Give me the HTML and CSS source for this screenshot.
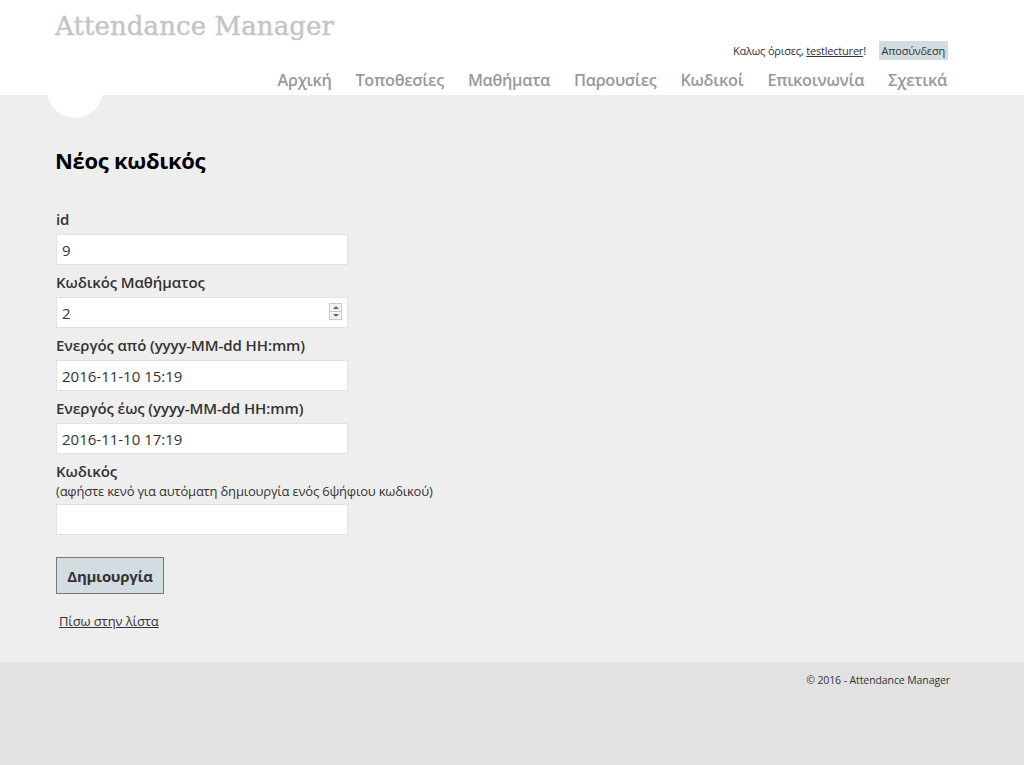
FILE: index.html
```html
<!DOCTYPE html>
<html lang="el">
<head>
<meta charset="utf-8">
<title>Νέος κωδικός - Attendance Manager</title>
<link rel="stylesheet" href="styles.css">
</head>
<body>
<header class="site-header">
  <div class="wrap header-inner">
    <p class="site-title">Attendance Manager</p>
    <div class="login">Καλως όρισες, <a href="#" class="user">testlecturer</a>! <a href="#" class="logout">Αποσύνδεση</a></div>
    <nav class="menu">
      <a href="#">Αρχική</a>
      <a href="#">Τοποθεσίες</a>
      <a href="#">Μαθήματα</a>
      <a href="#">Παρουσίες</a>
      <a href="#">Κωδικοί</a>
      <a href="#">Επικοινωνία</a>
      <a href="#">Σχετικά</a>
    </nav>
  </div>
</header>
<main class="body-content">
  <span class="dot"></span>
  <div class="wrap">
    <h2 class="page-title">Νέος κωδικός</h2>
    <form class="form">
      <label class="lbl first">id</label>
      <input class="field" type="text" value="9">
      <label class="lbl">Κωδικός Μαθήματος</label>
      <div class="num-wrap">
        <input class="field" type="text" value="2">
        <span class="spin"><span class="up"></span><span class="down"></span></span>
      </div>
      <label class="lbl">Ενεργός από (yyyy-MM-dd HH:mm)</label>
      <input class="field" type="text" value="2016-11-10 15:19">
      <label class="lbl">Ενεργός έως (yyyy-MM-dd HH:mm)</label>
      <input class="field" type="text" value="2016-11-10 17:19">
      <label class="lbl">Κωδικός</label>
      <div class="hint">(αφήστε κενό για αυτόματη δημιουργία ενός 6ψήφιου κωδικού)</div>
      <input class="field after-hint" type="text" value="">
      <button class="btn" type="button">Δημιουργία</button>
    </form>
    <a href="#" class="back">Πίσω στην λίστα</a>
  </div>
</main>
<footer class="site-footer">
  <div class="wrap footer-inner">
    <p>© 2016 - Attendance Manager</p>
  </div>
</footer>
</body>
</html>
```

FILE: styles.css
```css
html, body {
  margin: 0;
  padding: 0;
}
body {
  font-family: "Open Sans", "Noto Sans", sans-serif;
  color: #333;
  background: #e2e2e2;
  font-size: 13px;
}
a { color: #333; }
.wrap {
  width: 893px;
  margin-left: 55px;
}
.site-header {
  background: #fff;
  height: 95px;
}
.header-inner {
  display: flex;
  flex-direction: column;
  align-items: flex-end;
  height: 95px;
}
.site-title {
  align-self: flex-start;
  margin: 0;
  padding-top: 9px;
  font-family: "DejaVu Serif", serif;
  font-size: 26px;
  letter-spacing: 0.1px;
  color: #c4c4c4;
  -webkit-text-stroke: 0.4px #c4c4c4;
  line-height: 34px;
  white-space: nowrap;
}
.login {
  margin-top: -2px;
  font-size: 11px;
  line-height: 19px;
  color: #333;
  letter-spacing: -0.2px;
  white-space: nowrap;
}
.login .user { color: #333; }
.login .logout {
  display: inline-block;
  margin-left: 10px;
  background: #d3dce0;
  padding: 0 3px;
  line-height: 19px;
  text-decoration: none;
  color: #333;
}
.menu {
  display: flex;
  gap: 24px;
  margin-top: 8px;
  margin-right: 1px;
  white-space: nowrap;
}
.menu a {
  font-size: 16.3px;
  line-height: 24px;
  color: #999;
  text-decoration: none;
  font-weight: 600;
  letter-spacing: -0.3px;
}
.body-content {
  background: #efeeef;
  height: 567px;
  position: relative;
  overflow: hidden;
}
.dot {
  position: absolute;
  left: 47px;
  top: -33px;
  width: 56px;
  height: 56px;
  border-radius: 50%;
  background: #fff;
}
.wrap > .page-title {
  margin: 0;
  padding-top: 48px;
  font-size: 22px;
  line-height: 34px;
  font-weight: 700;
  color: #000;
  letter-spacing: -0.3px;
}
.form {
  display: flex;
  flex-direction: column;
  align-items: flex-start;
  padding-left: 1px;
}
.lbl {
  font-size: 15px;
  font-weight: 600;
  line-height: 20px;
  margin-top: 7px;
  margin-bottom: 5px;
  color: #333;
  letter-spacing: -0.1px;
}
.lbl.first { margin-top: 32px; }
.field {
  box-sizing: border-box;
  width: 292px;
  height: 31px;
  border: 1px solid #e2e2e2;
  background: #fff;
  padding: 0 5px;
  font-family: "Open Sans", "Noto Sans", sans-serif;
  font-size: 15px;
  color: #333;
  margin: 0;
  outline: none;
}
.num-wrap {
  position: relative;
}
.spin {
  position: absolute;
  right: 6px;
  top: 6px;
  width: 13px;
  height: 17px;
  border: 1px solid #c9c9c9;
  box-sizing: border-box;
  display: flex;
  flex-direction: column;
  background: #f4f4f4;
}
.spin .up, .spin .down {
  flex: 1;
  display: flex;
  align-items: center;
  justify-content: center;
}
.spin .up { border-bottom: 1px solid #c9c9c9; }
.spin .up::before {
  content: "";
  border-left: 3px solid transparent;
  border-right: 3px solid transparent;
  border-bottom: 3px solid #666;
}
.spin .down::before {
  content: "";
  border-left: 3px solid transparent;
  border-right: 3px solid transparent;
  border-top: 3px solid #666;
}
.hint {
  font-size: 13px;
  line-height: 20px;
  margin-top: -5px;
  margin-bottom: 3px;
  letter-spacing: -0.2px;
}
.btn {
  margin-top: 22px;
  width: 108px;
  height: 37px;
  background: #d3dce0;
  border: 1px solid #787878;
  font-family: "Open Sans", "Noto Sans", sans-serif;
  font-size: 15px;
  font-weight: 700;
  color: #333;
  padding: 0;
  letter-spacing: -0.3px;
}
.back {
  display: inline-block;
  margin-top: 17px;
  margin-left: 4px;
  font-size: 13px;
  line-height: 20px;
  color: #333;
  letter-spacing: -0.1px;
}
.site-footer {
  background: #e2e2e2;
  height: 103px;
}
.footer-inner {
  display: flex;
  justify-content: flex-end;
}
.footer-inner p {
  margin: 10px -2px 0 0;
  font-size: 10.5px;
  line-height: 16px;
  color: #333;
  letter-spacing: -0.1px;
}
```
